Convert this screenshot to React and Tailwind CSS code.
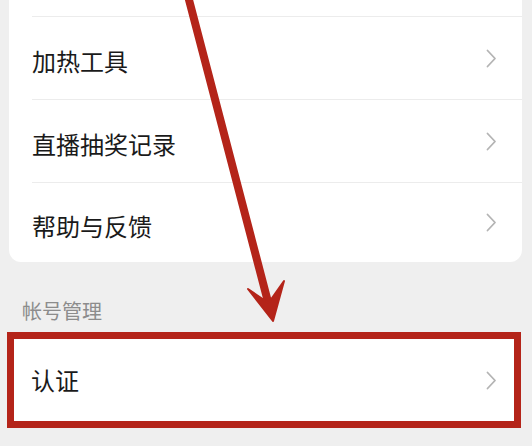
import React from 'react';

const Chevron = () => (
  <svg width="11" height="19" viewBox="0 0 11 19" fill="none">
    <path d="M1.5 1.5 L9 9.5 L1.5 17.5" stroke="#b4b4b4" strokeWidth="1.8" strokeLinecap="round" strokeLinejoin="round" />
  </svg>
);

const Row = ({ label, last }) => (
  <div className="pl-[23px]">
    <div className={`flex items-center justify-between pr-[25px] ${last ? 'h-[79px]' : 'h-[83px] border-b border-[#ececec]'}`}>
      <span className="mt-[6px] text-[24px] text-[#1a1a1a] leading-none">{label}</span>
      <Chevron />
    </div>
  </div>
);

const items = ['', '加热工具', '直播抽奖记录', '帮助与反馈'];

export default function App() {
  return (
    <div
      className="relative w-[532px] h-[446px] overflow-hidden bg-[#efefef]"
      style={{ fontFamily: '"Noto Sans CJK SC", "Noto Sans", sans-serif' }}
    >
      {/* settings card, scrolled so its first row is cut off */}
      <div className="ml-[9px] mr-[10px] -mt-[66px] bg-white rounded-b-[12px] overflow-hidden">
        {items.map((label, i) => (
          <Row key={i} label={label} last={i === items.length - 1} />
        ))}
      </div>

      <div className="pl-[22px] pt-[35px] pb-[7px] text-[20px] leading-[28px] text-[#8c8c8c]">帐号管理</div>

      {/* highlighted row */}
      <div className="mx-[7px] w-[514px] h-[96px] border-[7px] border-[#b42419] bg-white flex items-center justify-between pl-[17px] pr-[17px]">
        <span className="text-[24px] text-[#1a1a1a] leading-none">认证</span>
        <Chevron />
      </div>

      {/* annotation arrow */}
      <svg className="absolute inset-0 pointer-events-none" width="532" height="446" viewBox="0 0 532 446">
        <line x1="188" y1="-4" x2="268" y2="302" stroke="#b42419" strokeWidth="8" strokeLinecap="round" />
        <polygon points="273,321 248,289 268.5,303 284,281" fill="#b42419" stroke="#b42419" strokeWidth="2" strokeLinejoin="round" />
      </svg>
    </div>
  );
}
